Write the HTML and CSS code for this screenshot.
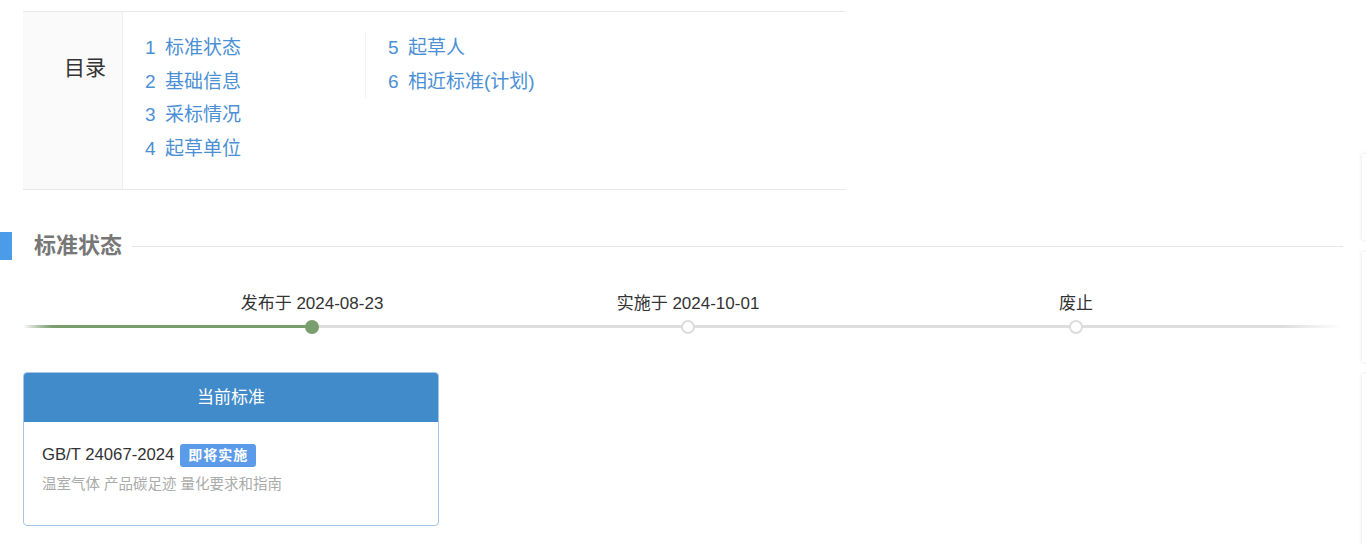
FILE: index.html
```html
<!DOCTYPE html>
<html lang="zh-CN">
<head>
<meta charset="utf-8">
<title>标准状态</title>
<link rel="stylesheet" href="styles.css">
</head>
<body>
<div class="page">
  <div class="toc">
    <div class="toc-label">目录</div>
    <div class="toc-body">
      <ul class="toc-col">
        <li><a href="#"><span class="num">1</span>标准状态</a></li>
        <li><a href="#"><span class="num">2</span>基础信息</a></li>
        <li><a href="#"><span class="num">3</span>采标情况</a></li>
        <li><a href="#"><span class="num">4</span>起草单位</a></li>
      </ul>
      <ul class="toc-col toc-col-2">
        <li><a href="#"><span class="num">5</span>起草人</a></li>
        <li><a href="#"><span class="num">6</span>相近标准(计划)</a></li>
      </ul>
    </div>
  </div>

  <div class="section-head">
    <span class="section-bar"></span>
    <h2 class="section-title">标准状态</h2>
    <span class="section-line"></span>
  </div>

  <div class="timeline">
    <div class="tl-item tl-first">
      <div class="tl-label">发布于 2024-08-23</div>
      <span class="tl-dot done"></span>
    </div>
    <div class="tl-item tl-second">
      <div class="tl-label">实施于 2024-10-01</div>
      <span class="tl-dot"></span>
    </div>
    <div class="tl-item tl-third">
      <div class="tl-label">废止</div>
      <span class="tl-dot"></span>
    </div>
  </div>

  <div class="card">
    <div class="card-head">当前标准</div>
    <div class="card-body">
      <div class="std-code">GB/T 24067-2024<span class="badge">即将实施</span></div>
      <div class="std-name">温室气体 产品碳足迹 量化要求和指南</div>
    </div>
  </div>
</div>

<div class="side-tools">
  <div class="side-box b1"></div>
  <div class="side-box b2"></div>
  <div class="side-box b3"></div>
</div>
</body>
</html>
```

FILE: styles.css
```css
* { box-sizing: border-box; }
html, body { margin: 0; padding: 0; background: #fff; }
body {
  font-family: "Liberation Sans", "Noto Sans CJK SC", sans-serif;
  color: #333;
  overflow: hidden;
}
.page { padding-top: 11px; }

/* TOC */
.toc {
  display: flex;
  width: 823px;
  margin-left: 23px;
  border-top: 1px solid #e8e8e8;
  border-bottom: 1px solid #e8e8e8;
  height: 179px;
}
.toc-label {
  width: 100px;
  background: #fafafa;
  border-right: 1px solid #efefef;
  text-align: right;
  padding-right: 16px;
  padding-top: 42px;
  font-size: 21px;
  line-height: 28px;
  color: #333;
}
.toc-body {
  display: flex;
  padding: 19px 0 0 22px;
}
.toc-col {
  list-style: none;
  margin: 0;
  padding: 0;
  width: 220px;
}
.toc-col li {
  height: 33.7px;
  line-height: 33.7px;
  font-size: 19px;
  white-space: nowrap;
}
.toc-col a { color: #4b8fd5; text-decoration: none; }
.toc-col .num { display: inline-block; width: 20px; }
.toc-col-2 {
  border-left: 1px solid #f2f2f2;
  padding-left: 22px;
  align-self: flex-start;
}

/* Section heading */
.section-head {
  display: flex;
  align-items: center;
  margin-top: 42px;
  width: 1343px;
  height: 28px;
}
.section-bar {
  width: 12px;
  height: 28px;
  background: #4a9be8;
}
.section-title {
  margin: 0 0 0 22px;
  font-size: 22px;
  font-weight: bold;
  color: #777;
  line-height: 28px;
  white-space: nowrap;
}
.section-line {
  flex: 1;
  height: 1px;
  background: #e6e6e6;
  margin-left: 10px;
}

/* Timeline */
.timeline {
  display: flex;
  margin-left: 23px;
  width: 1320px;
  margin-top: 34px;
  background-image:
    linear-gradient(to right, rgba(122,158,110,0) 0, #7a9e6e 30px, #7a9e6e 100%),
    linear-gradient(to right, rgba(221,221,221,0) 0, #dedede 30px, #dedede calc(100% - 60px), rgba(221,221,221,0) 100%);
  background-size: 289px 3px, 100% 3px;
  background-position: left 0 bottom 6px, left 0 bottom 6px;
  background-repeat: no-repeat;
}
.tl-item {
  width: 160px;
  display: flex;
  flex-direction: column;
  align-items: center;
}
.tl-first { margin-left: 209px; }
.tl-second { margin-left: 216px; }
.tl-third { margin-left: 228px; }
.tl-label {
  font-size: 17px;
  line-height: 20px;
  color: #333;
  white-space: nowrap;
}
.tl-dot {
  margin-top: 6px;
  width: 14px;
  height: 14px;
  border-radius: 50%;
  background: #fff;
  border: 2px solid #dcdcdc;
}
.tl-dot.done {
  background: #7a9e6e;
  border-color: #7a9e6e;
}

/* Card */
.card {
  margin: 38px 0 0 23px;
  width: 416px;
  height: 154px;
  border: 1px solid #a3c5e8;
  border-radius: 4px;
  overflow: hidden;
}
.card-head {
  height: 49px;
  background: #428bca;
  color: #fff;
  font-size: 17px;
  line-height: 49px;
  text-align: center;
}
.card-body { padding: 21px 18px 0 18px; }
.std-code {
  font-size: 16.7px;
  line-height: 24px;
  color: #333;
  display: flex;
  align-items: center;
}
.badge {
  margin-left: 6px;
  background: #5b9be9;
  color: #fff;
  font-size: 14px;
  font-weight: bold;
  line-height: 23px;
  padding: 0 8px;
  border-radius: 3px;
  letter-spacing: 1px;
}
.std-name {
  margin-top: 7px;
  font-size: 14.5px;
  line-height: 20px;
  color: #aaa;
}

/* right side floating tools (mostly off-screen) */
.side-tools {
  position: fixed;
  left: 1362px;
  top: 154px;
  display: flex;
  flex-direction: column;
  gap: 12px;
}
.side-box {
  width: 60px;
  background: #fff;
  box-shadow: 0 0 4px rgba(0,0,0,0.12);
}
.b1 { height: 86px; }
.b2 { height: 110px; }
.b3 { height: 200px; }
```
